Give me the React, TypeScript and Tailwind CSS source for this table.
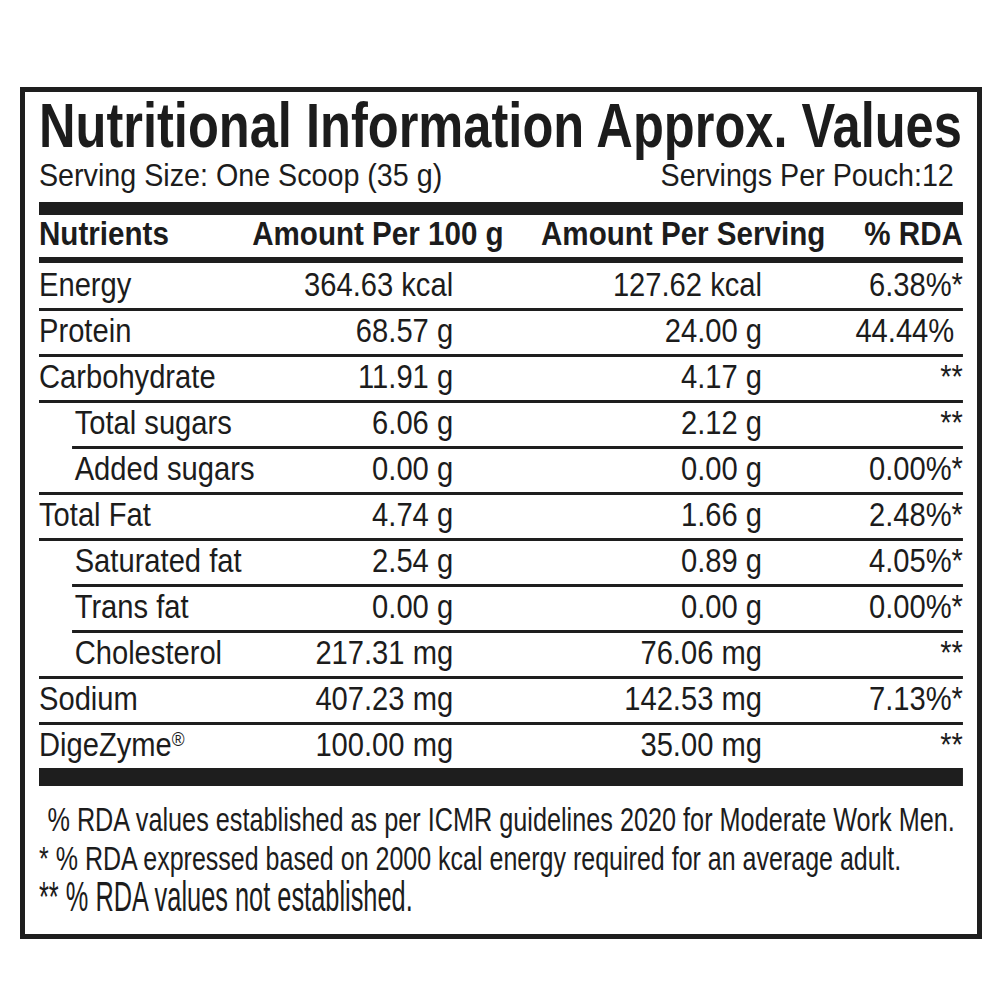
const rows = [
  { name: "Energy", per100: "364.63 kcal", serving: "127.62 kcal", rda: "6.38%*" },
  { name: "Protein", per100: "68.57 g", serving: "24.00 g", rda: "44.44%", rdaPad: true },
  { name: "Carbohydrate", per100: "11.91 g", serving: "4.17 g", rda: "**" },
  { name: "Total sugars", per100: "6.06 g", serving: "2.12 g", rda: "**", sub: true },
  { name: "Added sugars", per100: "0.00 g", serving: "0.00 g", rda: "0.00%*", sub: true },
  { name: "Total Fat", per100: "4.74 g", serving: "1.66 g", rda: "2.48%*" },
  { name: "Saturated fat", per100: "2.54 g", serving: "0.89 g", rda: "4.05%*", sub: true },
  { name: "Trans fat", per100: "0.00 g", serving: "0.00 g", rda: "0.00%*", sub: true },
  { name: "Cholesterol", per100: "217.31 mg", serving: "76.06 mg", rda: "**", sub: true },
  { name: "Sodium", per100: "407.23 mg", serving: "142.53 mg", rda: "7.13%*" },
  { name: "DigeZyme", reg: true, per100: "100.00 mg", serving: "35.00 mg", rda: "**" },
];

export default function App() {
  return (
    <div className="min-h-[1000px] bg-white pt-[87px] text-[#1c1c1c] [font-family:'Liberation_Sans',Arial,sans-serif]">
      <div className="ml-[20px] w-[962px] overflow-hidden border-[5px] border-[#1e1e1e] px-[14px] pt-[2px] pb-[20px]">
        {/* title */}
        <div className="w-[1151px] origin-left scale-x-[0.803]">
          <h1 className="text-[63px] font-bold leading-[63px] whitespace-nowrap">
            Nutritional Information Approx. Values
          </h1>
        </div>
        <div className="mt-[2px] flex w-[1031px] origin-left scale-x-[0.896] justify-between pr-[10px] text-[32px] leading-[32px] whitespace-nowrap">
          <span>Serving Size: One Scoop (35 g)</span>
          <span>Servings Per Pouch:12</span>
        </div>
        <div className="mt-[11px] h-[13px] bg-[#1e1e1e]" />

        {/* table */}
        <div className="w-[1062px] origin-left scale-x-[0.87]">
          <div className="grid h-[42px] grid-cols-[245px_332px_1fr_auto] pt-[1px] text-[34px] font-bold leading-[34px] whitespace-nowrap">
            <span>Nutrients</span>
            <span>Amount Per 100 g</span>
            <span>Amount Per Serving</span>
            <span>% RDA</span>
          </div>
          <div className="h-[6px] bg-[#1e1e1e]" />

          {rows.map((r, i) => {
            const next = rows[i + 1];
            const last = i === rows.length - 1;
            const indentLine = r.sub && next?.sub;
            return (
              <div key={r.name} className="flex flex-col">
                <div
                  className={
                    i === 0
                      ? "grid h-[45px] grid-cols-[246px_230px_355px_231px] pt-[5px] text-[33.5px] leading-[34px] whitespace-nowrap"
                      : "grid h-[43px] grid-cols-[246px_230px_355px_231px] pt-[3px] text-[33.5px] leading-[34px] whitespace-nowrap"
                  }
                >
                  <span className={r.sub ? "pl-[41px]" : ""}>
                    {r.name}
                    {r.reg && <sup className="text-[20px]">®</sup>}
                  </span>
                  <span className="text-right">{r.per100}</span>
                  <span className="text-right">{r.serving}</span>
                  <span className={r.rdaPad ? "pr-[10px] text-right" : "text-right"}>{r.rda}</span>
                </div>
                {last ? (
                  <div className="h-[18px] bg-[#1e1e1e]" />
                ) : (
                  <div className={indentLine ? "ml-[38px] h-[3px] bg-[#1e1e1e]" : "h-[3px] bg-[#1e1e1e]"} />
                )}
              </div>
            );
          })}
        </div>

        {/* footnotes */}
        <div className="mt-[14px] flex flex-col items-start whitespace-nowrap">
          <p className="origin-left scale-x-[0.765] pl-[11px] text-[33px] leading-[39px]">
            % RDA values established as per ICMR guidelines 2020 for Moderate Work Men.
          </p>
          <p className="origin-left scale-x-[0.758] text-[33px] leading-[39px]">
            * % RDA expressed based on 2000 kcal energy required for an average adult.
          </p>
          <p className="origin-left scale-x-[0.59] text-[43px] leading-[36px]">
            ** % RDA values not established.
          </p>
        </div>
      </div>
    </div>
  );
}
